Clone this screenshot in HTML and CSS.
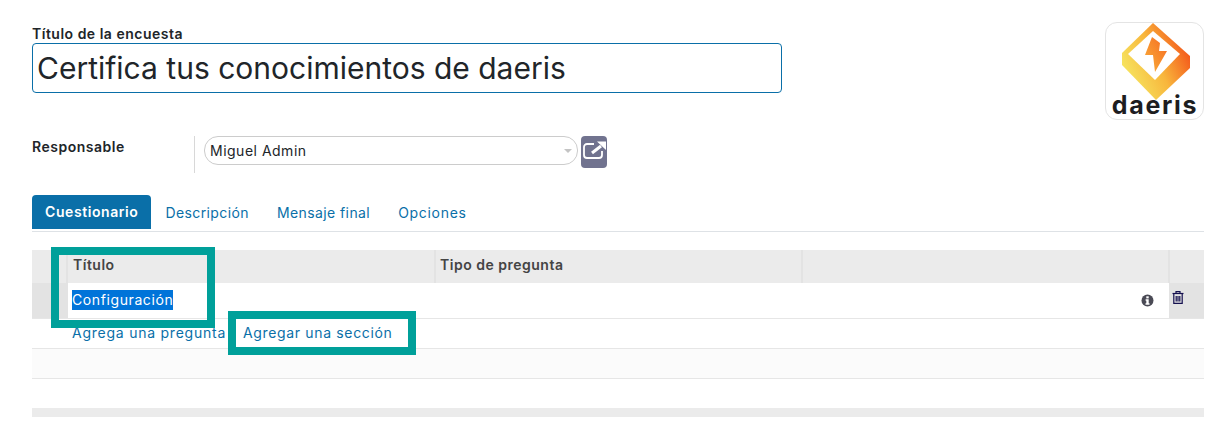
FILE: index.html
```html
<!DOCTYPE html>
<html lang="es">
<head>
<meta charset="utf-8">
<title>Encuesta</title>
<link rel="stylesheet" href="styles.css">
</head>
<body>
<main class="sheet">
  <header class="head">
    <div class="title-block">
      <label class="title-label">Título de la encuesta</label>
      <div class="title-input">Certifica tus conocimientos de daeris</div>
    </div>
    <div class="logo">
      <svg width="97" height="96" viewBox="0 0 97 96">
        <defs>
          <linearGradient id="gOuter" x1="0.1" y1="0.75" x2="0.95" y2="0.3">
            <stop offset="0" stop-color="#f6e45f"/>
            <stop offset="0.5" stop-color="#f8b63c"/>
            <stop offset="1" stop-color="#f4571a"/>
          </linearGradient>
          <linearGradient id="gBolt" x1="0" y1="1" x2="1" y2="0">
            <stop offset="0" stop-color="#f9b13c"/>
            <stop offset="1" stop-color="#f66a20"/>
          </linearGradient>
        </defs>
        <path d="M47 0 L84 33 L84 45 L50 77 L16 42 L16 30 Z" fill="url(#gOuter)"/>
        <path d="M47 8 L74 31 L49 57 L22 31 Z" fill="#fff"/>
        <path d="M46 14 L39 32 L47 32 L49 49 L61 28 L53 28 L54 20 Z" fill="url(#gBolt)"/>
        <text class="logo-word" x="49" y="91" text-anchor="middle">daeris</text>
      </svg>
    </div>
  </header>

  <section class="owner">
    <div class="owner-label">Responsable</div>
    <div class="owner-field">
      <div class="select">
        <span>Miguel Admin</span>
        <i class="caret"></i>
      </div>
      <button class="open-btn" type="button" aria-label="Abrir">
        <svg width="24" height="20" viewBox="0 0 24 20" fill="none" stroke="#fff">
          <path d="M12 4 H5 A3 3 0 0 0 2 7 V15 A3 3 0 0 0 5 18 H17 A3 3 0 0 0 20 15 V11" stroke-width="1.800"/>
          <path d="M10 13 L19 6" stroke-width="3"/>
          <path d="M15 1.500 H24 V10 Z" fill="#fff" stroke="none"/>
        </svg>
      </button>
    </div>
  </section>

  <nav class="tabs">
    <a class="tab active">Cuestionario</a>
    <a class="tab">Descripción</a>
    <a class="tab">Mensaje final</a>
    <a class="tab tab-last">Opciones</a>
  </nav>

  <section class="table">
    <div class="row header">
      <div class="c-handle"></div>
      <div class="c-title">Título</div>
      <div class="c-type">Tipo de pregunta</div>
      <div class="c-extra"></div>
      <div class="c-del"></div>
    </div>
    <div class="row data">
      <div class="c-handle"></div>
      <div class="c-main"><span class="selected">Configuración</span>
        <svg class="info" width="13" height="13" viewBox="0 0 13 13"><circle cx="6.500" cy="6.500" r="6" fill="#4a4a55"/><rect x="5.300" y="2.300" width="2.400" height="2.100" fill="#fff"/><path d="M4.600 5.300 H7.700 V9.300 H8.500 V10.700 H4.500 V9.300 H5.300 V6.700 H4.600 Z" fill="#fff"/></svg>
      </div>
      <div class="c-del">
        <svg width="12" height="13" viewBox="0 0 12 13" fill="none" stroke="#14104f" stroke-width="1.200"><path d="M0.500 2.500 H11.500"/><path d="M4 2.500 V0.700 H8 V2.500"/><path d="M1.800 2.500 V12.400 H10.200 V2.500"/><path d="M4.200 5 V10.500 M6 5 V10.500 M7.800 5 V10.500"/></svg>
      </div>
    </div>
    <div class="row add">
      <a class="link link-q">Agrega una pregunta</a>
      <a class="link link-s">Agregar una sección</a>
    </div>
    <div class="row blank"></div>
    <div class="foot"></div>
    <div class="mark mark-a"></div>
    <div class="mark mark-b"></div>
  </section>
</main>
</body>
</html>
```
FILE: styles.css
```css
* { box-sizing: border-box; }
html, body { margin: 0; padding: 0; }
body { background: #fff; color: #212529; font-family: "Inter", "Noto Sans", sans-serif; font-size: 14px; width: 1225px; height: 430px; overflow: hidden; }
.sheet { padding: 22px 21px 0 32px; }
.head { display: flex; justify-content: space-between; align-items: flex-start; }
.title-block { padding-top: 2px; }
.title-label { display: block; font-weight: 600; font-size: 14px; letter-spacing: 0.5px; line-height: 19px; color: #212529; }
.title-input { width: 750px; height: 50px; border: 1px solid #0a6fa8; border-radius: 4px; padding-left: 4px; font-size: 30px; line-height: 48px; color: #212529; }
.logo { width: 99px; height: 98px; border: 1px solid #e4e4e4; border-radius: 12px; background: #fff; }
.logo svg { display: block; }
.logo-word { font-family: "Inter", sans-serif; font-weight: 700; font-size: 25px; letter-spacing: 1.700px; fill: #1d1d1f; }
.owner { display: flex; margin-top: 16px; height: 38px; }
.owner-label { width: 162px; font-weight: 600; font-size: 14px; letter-spacing: 0.5px; line-height: 22px; }
.owner-field { display: flex; align-items: flex-start; border-left: 1px solid #d8d8d8; padding-left: 9px; height: 37px; }
.select { width: 374px; height: 29px; border: 1px solid #cccccc; border-radius: 14px; display: flex; align-items: center; justify-content: space-between; padding: 0 5px; font-size: 14px; letter-spacing: 0.5px; }
.caret { width: 0; height: 0; border-left: 4px solid transparent; border-right: 4px solid transparent; border-top: 4px solid #c4c4c4; }
.open-btn { width: 26px; height: 32px; margin-left: 3px; padding: 4px 0 0; border: 0; border-radius: 4px; background: #71738f; display: flex; align-items: flex-start; justify-content: center; }
.tabs { display: flex; margin-top: 21px; border-bottom: 1px solid #dee2e6; height: 37px; }
.tab { height: 34px; line-height: 36px; font-size: 14px; letter-spacing: 0.4px; color: #0a6fa8; padding: 0 14px; }
.tab.active { background: #0a6fa8; color: #fff; font-weight: 600; letter-spacing: 0.58px; border-radius: 4px 4px 0 0; padding: 0 13px; line-height: 34px; }
.tab-last { letter-spacing: 0.7px; }
.table { position: relative; margin-top: 18px; }
.row { display: flex; }
.header { height: 33px; background: #ebebeb; font-weight: 600; font-size: 14px; letter-spacing: 0.5px; color: #444; line-height: 30px; }
.header > div { border-right: 2px solid #e3e3e3; }
.c-handle { width: 36px; flex: none; }
.c-title { width: 368px; padding-left: 5px; }
.c-type { width: 367px; padding-left: 4px; }
.c-extra { flex: 1; }
.c-del { width: 35px; flex: none; }
.header .c-del { width: 34px; border-right: 0; }
.data { height: 36px; border-bottom: 1px solid #e6e6e6; }
.data .c-handle { background: #e3e3e3; }
.data .c-del { background: #e3e3e3; padding: 8px 0 0 3px; }
.data .c-del svg { display: block; }
.c-main { flex: 1; display: flex; align-items: center; justify-content: space-between; padding: 0 15px 1px 4px; }
.selected { background: #0074d9; color: #fff; line-height: 20px; font-size: 14px; letter-spacing: 0.6px; }
.add { height: 30px; gap: 17px; padding-left: 40px; border-bottom: 1px solid #e6e6e6; line-height: 28px; font-size: 14px; }
.link { color: #0a6fa8; }
.link-q { letter-spacing: 0.76px; }
.link-s { letter-spacing: 0.65px; }
.blank { height: 30px; background: #fbfbfb; border-bottom: 1px solid #e6e6e6; }
.foot { height: 9px; margin-top: 29px; background: #ebebeb; }
.mark { position: absolute; border: 8px solid #00a09a; }
.mark-a { left: 19px; top: -3px; width: 164px; height: 81px; }
.mark-b { left: 196px; top: 61px; width: 188px; height: 44px; }
```
